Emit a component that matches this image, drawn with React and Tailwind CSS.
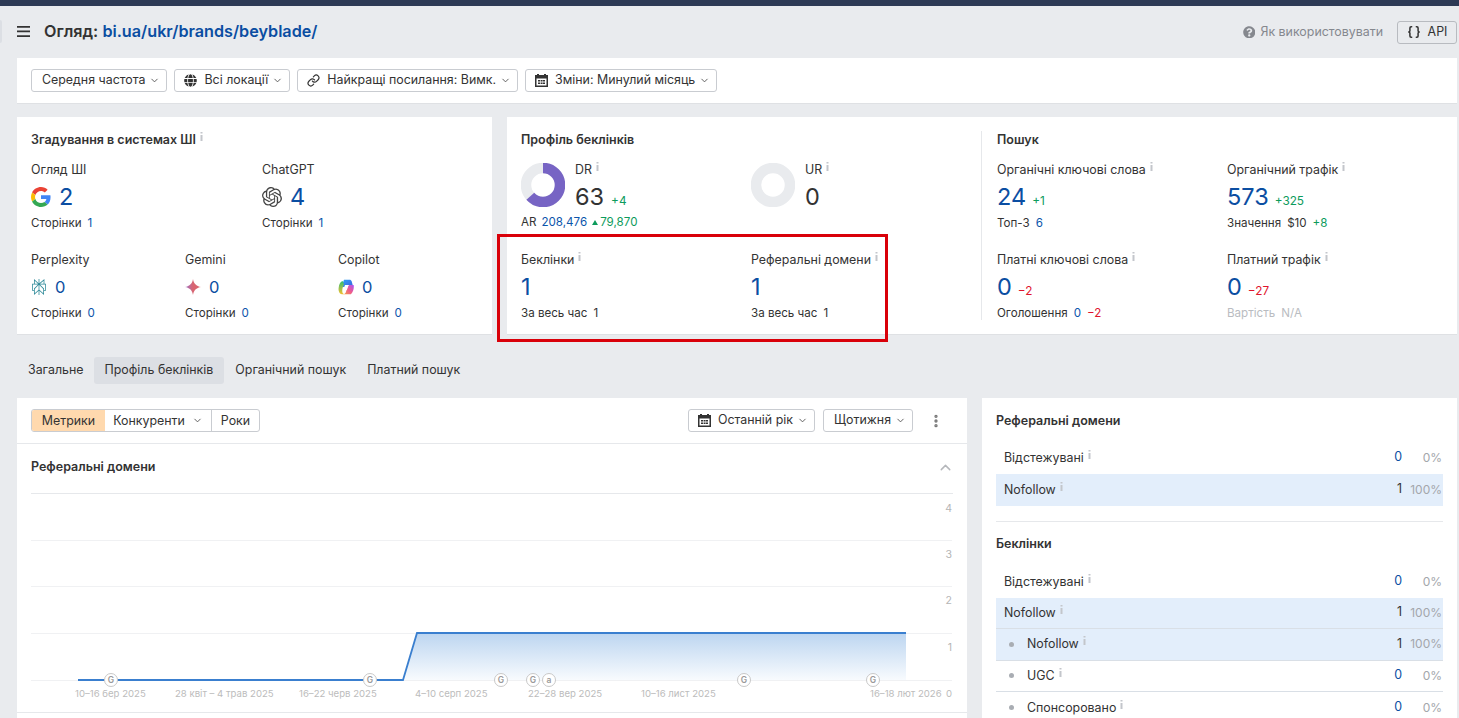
import { ChevronDown, ChevronUp, Link, Braces, EllipsisVertical } from "lucide-react"
import { FaGlobe, FaQuestionCircle } from "react-icons/fa"
import { SiOpenai, SiPerplexity } from "react-icons/si"

const Info = () => (
    <svg width="5" height="9" viewBox="0 0 5 9" className="ml-[3px] mt-[1px] shrink-0 text-[#c3c6cb]">
        <rect x="1.5" y="0" width="2" height="1.5" fill="currentColor" />
        <rect x="1.5" y="3" width="2" height="6" fill="currentColor" />
    </svg>
)

const Calendar = () => (
    <svg width="13" height="13" viewBox="0 0 13 13" className="shrink-0 text-[#333]">
        <path fill="currentColor" fillRule="evenodd" d="M2 0h2v1h5V0h2v1h2v12H0V1h2zM1.5 4.5v7h10v-7zM3 6h2v1.5H3zm2.6 0h2v1.5h-2zM8 6h2v1.5H8zM3 8.5h2V10H3zm2.6 0h2V10h-2zm2.4 0h2V10H8z" />
    </svg>
)

const Drop = ({ children, icon }) => (
    <button className={`h-[23px] ${icon ? "pl-[9px]" : "pl-[10px]"} pr-[6px] flex items-center gap-[7px] bg-white border border-[#c9ccd1] rounded-[3px] text-[12.4px] text-[#333]`}>
        {icon}
        <span>{children}</span>
        <ChevronDown size={11} strokeWidth={2} className="text-[#555] -ml-[3px]" />
    </button>
)

const Label = ({ children }) => (
    <div className="h-[18px] flex items-start text-[12.4px] leading-[18px] text-[#333]">
        <span>{children}</span>
        <Info />
    </div>
)

const Sub = ({ children }) => (
    <div className="h-[18px] flex items-center gap-[6px] text-[11.6px] text-[#333]">{children}</div>
)

const Blue = ({ children }) => <span className="text-[#0b55ab]">{children}</span>

const Value = ({ children, delta, neg }) => (
    <div className="h-[36px] flex items-center">
        <span className="text-[23.5px] text-[#0b4ea2]">{children}</span>
        {delta && <span className={`ml-[6px] mt-[9px] text-[11.8px] ${neg ? "text-[#e0142c]" : "text-[#0d9b5c]"}`}>{delta}</span>}
    </div>
)

const Metric = ({ label, value, delta, neg, sub }) => (
    <div>
        <Label>{label}</Label>
        <Value delta={delta} neg={neg}>{value}</Value>
        <Sub>{sub}</Sub>
    </div>
)

const GoogleIcon = () => (
    <svg width="20" height="20" viewBox="0 0 48 48" className="shrink-0">
        <path fill="#EA4335" d="M24 9.5c3.5 0 6.6 1.2 9.1 3.6l6.8-6.8C35.8 2.5 30.3 0 24 0 14.6 0 6.5 5.4 2.6 13.2l7.9 6.2C12.4 13.6 17.7 9.5 24 9.5z" />
        <path fill="#4285F4" d="M46.9 24.5c0-1.6-.1-3.1-.4-4.5H24v9h12.9c-.6 3-2.2 5.5-4.7 7.2l7.7 6c4.5-4.2 7-10.3 7-17.7z" />
        <path fill="#FBBC05" d="M10.5 28.6c-.5-1.4-.8-3-.8-4.6s.3-3.2.8-4.6l-7.9-6.2C.9 16.5 0 20.1 0 24s.9 7.5 2.6 10.8z" />
        <path fill="#34A853" d="M24 48c6.5 0 11.9-2.1 15.9-5.8l-7.7-6c-2.2 1.4-4.9 2.3-8.2 2.3-6.3 0-11.6-4.1-13.5-9.9l-7.9 6.2C6.5 42.6 14.6 48 24 48z" />
    </svg>
)

const GeminiIcon = () => (
    <svg width="16" height="16" viewBox="0 0 24 24" className="shrink-0">
        <defs>
            <linearGradient id="gem" x1="0" y1="0" x2="1" y2="0">
                <stop offset="0" stopColor="#9b72cb" />
                <stop offset="0.5" stopColor="#d96570" />
                <stop offset="1" stopColor="#d96570" />
            </linearGradient>
        </defs>
        <path fill="url(#gem)" d="M12 0c.8 6.5 5 11 12 12-7 1-11.2 5.5-12 12-.8-6.5-5-11-12-12 7-1 11.2-5.5 12-12z" />
    </svg>
)

const CopilotIcon = () => (
    <svg width="16" height="16" viewBox="0 0 24 24" className="shrink-0">
        <defs>
            <linearGradient id="cop1" x1="0" y1="0" x2="1" y2="1">
                <stop offset="0" stopColor="#2aa4f4" />
                <stop offset="1" stopColor="#3f5fe0" />
            </linearGradient>
            <linearGradient id="cop2" x1="0" y1="1" x2="1" y2="0">
                <stop offset="0" stopColor="#f5a03e" />
                <stop offset="0.5" stopColor="#ee5a8f" />
                <stop offset="1" stopColor="#a855f7" />
            </linearGradient>
            <linearGradient id="cop3" x1="0" y1="0" x2="0" y2="1">
                <stop offset="0" stopColor="#2fbf71" />
                <stop offset="1" stopColor="#f5c02e" />
            </linearGradient>
        </defs>
        <path fill="url(#cop1)" d="M9 1h8c2 0 3 1 3.5 2.5L22 9h-9l-2 3H5z" />
        <path fill="url(#cop3)" d="M7 3C3.5 4 1.500 8 1 13c-.6 4 .5 9 5 10h4c-2-.5-3-1.500-3.500-3.500C6 16 7 12 9 8z" />
        <path fill="url(#cop2)" d="M23.5 9c.8 4-.5 10-3.500 13-1 1-2 1-4 1H8c2-.5 3.500-2 4-4l2-6c.5-2 1.500-4 3-4z" />
        <path fill="#fff" d="M10.5 9H16l-2.800 7.500H7.800z" />
    </svg>
)

const AiCell = ({ label, icon, value, sub, big }) => (
    <div>
        <div className="h-[18px] text-[12.4px] leading-[18px] text-[#333]">{label}</div>
        <div className="h-[36px] flex items-center gap-[8px]">
            {icon}
            <span className={big ? "text-[23.5px] text-[#0b4ea2]" : "text-[16.5px] text-[#0b4ea2]"}>{value}</span>
        </div>
        <Sub>Сторінки <Blue>{sub}</Blue></Sub>
    </div>
)

const Donut = ({ percent }) => {
    const r = 17
    const c = 2 * Math.PI * r
    return (
        <svg width="44" height="44" viewBox="0 0 44 44" className="shrink-0 mr-[10px]">
            <circle cx="22" cy="22" r={r} fill="none" stroke="#e9ebee" strokeWidth="10.5" />
            {percent > 0 && (
                <circle cx="22" cy="22" r={r} fill="none" stroke="#7764c4" strokeWidth="10.5" strokeDasharray={`${c * percent / 100} ${c}`} transform="rotate(-90 22 22)" />
            )}
        </svg>
    )
}

const Rating = ({ label, value, delta, percent }) => (
    <div className="flex">
        <Donut percent={percent} />
        <div className="-mt-[2px]">
            <Label>{label}</Label>
            <div className="h-[36px] flex items-center">
                <span className="text-[23.5px] text-[#333]">{value}</span>
                {delta && <span className="ml-[7px] mt-[9px] text-[11.8px] text-[#0d9b5c]">{delta}</span>}
            </div>
        </div>
    </div>
)

const Row = ({ label, value, pct, active, nested, border, tall, first }) => (
    <div className={`${tall ? "h-[33px]" : first ? "h-[32px]" : "h-[31.5px]"} flex items-center pr-[1px] text-[12.4px] ${active ? "bg-[#e3eefb]" : ""} ${border ? "border-b border-[#d9dfe6]" : ""}`}>
        {nested && <span className="ml-[13px] w-[5px] h-[5px] rounded-full bg-[#a9adb3]" />}
        <div className={`${nested ? "ml-[13px]" : "ml-[8px]"} flex items-start leading-[18px] text-[#333]`}>
            <span>{label}</span>
            <Info />
        </div>
        <span className={`ml-auto ${value === "1" ? "text-[#333]" : "text-[#0b4ea2]"}`}>{value}</span>
        <span className="w-[40px] text-right text-[12px] text-[#a3a6ab]">{pct}</span>
    </div>
)

const Marker = ({ x, t = "G" }) => (
    <g>
        <circle cx={x} cy="680" r="6.5" fill="#fff" stroke="#c8c8c8" />
        <text x={x} y="683" textAnchor="middle" fontSize="8.5" fontWeight="600" fill="#9a9a9a">{t}</text>
    </g>
)

const ticks = [
    [75, "10–16 бер 2025"],
    [175, "28 квіт – 4 трав 2025"],
    [299, "16–22 черв 2025"],
    [415, "4–10 серп 2025"],
    [528, "22–28 вер 2025"],
    [641, "10–16 лист 2025"],
    [870, "16–18 лют 2026"],
]

const Chart = () => (
    <svg viewBox="31 494 922 218" className="block w-[922px] h-[218px]">
        <defs>
            <linearGradient id="area" x1="0" y1="0" x2="0" y2="1">
                <stop offset="0" stopColor="#bcd5f0" />
                <stop offset="1" stopColor="#f8fbfe" />
            </linearGradient>
        </defs>
        {[540, 586, 633, 680].map(y => (
            <line key={y} x1="31" x2="952" y1={y + 0.5} y2={y + 0.5} stroke="#f0f1f3" />
        ))}
        {[[508, "4"], [554, "3"], [600, "2"], [647, "1"]].map(([y, t]) => (
            <text key={t} x="952" y={y + 4} textAnchor="end" fontSize="10.5" fill="#b5b5b5">{t}</text>
        ))}
        <path d="M403 680 L417 633 H906 V680 Z" fill="url(#area)" />
        <path d="M78 680 H403 L417 633 H906" fill="none" stroke="#3a7fcf" strokeWidth="1.8" />
        {ticks.map(([x, t]) => (
            <text key={t} x={x} y="697" fontSize="9.6" fill="#bcbcbc">{t}</text>
        ))}
        <text x="952" y="697" textAnchor="end" fontSize="9.6" fill="#bcbcbc">0</text>
        <Marker x={111} />
        <Marker x={370} />
        <Marker x={501} />
        <Marker x={533} />
        <Marker x={549} t="a" />
        <Marker x={744} />
        <Marker x={873} />
    </svg>
)

export default function App() {
    return (
        <div className="relative h-[718px] overflow-hidden bg-[#e9ebee] font-['Inter',sans-serif] text-[#333]">
            <div className="h-[6px] bg-[#2d3a55]" />

            {/* header */}
            <div className="h-[52px] flex items-center pl-[17px] pr-[2px]">
                <svg width="13" height="11" viewBox="0 0 13 11" className="-mt-[2px] text-[#333]">
                    <path fill="currentColor" d="M0 0h13v1.7H0zM0 4.6h13v1.7H0zM0 9.2h13v1.7H0z" />
                </svg>
                <div className="ml-[14px] -mt-[2px] text-[16.2px] font-semibold leading-none">
                    Огляд: <span className="text-[#0b4ea2]">bi.ua/ukr/brands/beyblade/</span>
                </div>
                <div className="ml-auto flex items-center gap-[5px] text-[12.4px] text-[#85888e]">
                    <FaQuestionCircle size={12.5} />
                    <span>Як використовувати</span>
                </div>
                <button className="ml-[14px] h-[23px] w-[60px] flex items-center justify-center gap-[7px] border border-[#b8bbc0] rounded-[3px] text-[12.4px] text-[#333]">
                    <Braces size={14} strokeWidth={2.6} />
                    API
                </button>
            </div>

            {/* filters */}
            <div className="ml-[17px] mr-[2px] h-[46px] bg-white border-b border-[#dfe1e4] flex items-center gap-[7px] pl-[14px]">
                <Drop>Середня частота</Drop>
                <Drop icon={<FaGlobe size={13} className="text-[#333]" />}>Всі локації</Drop>
                <Drop icon={<Link size={13} strokeWidth={2.2} />}>Найкращі посилання: Вимк.</Drop>
                <Drop icon={<Calendar />}>Зміни: Минулий місяць</Drop>
            </div>

            {/* stats */}
            <div className="ml-[17px] mr-[2px] mt-[13px] h-[218px] flex gap-[15px]">
                <div className="w-[475px] bg-white border-b border-[#dfe1e4] px-[14px] pt-[14px]">
                    <div className="h-[18px] flex items-start text-[12.5px] leading-[18px] font-semibold">
                        <span>Згадування в системах ШІ</span>
                        <Info />
                    </div>
                    <div className="mt-[12px] grid grid-cols-[231px_1fr]">
                        <AiCell big label="Огляд ШІ" icon={<GoogleIcon />} value="2" sub="1" />
                        <AiCell big label="ChatGPT" icon={<SiOpenai size={20} className="text-[#444]" />} value="4" sub="1" />
                    </div>
                    <div className="mt-[18px] grid grid-cols-[154px_153px_1fr]">
                        <AiCell label="Perplexity" icon={<SiPerplexity size={16} className="text-[#2f8a99]" />} value="0" sub="0" />
                        <AiCell label="Gemini" icon={<GeminiIcon />} value="0" sub="0" />
                        <AiCell label="Copilot" icon={<CopilotIcon />} value="0" sub="0" />
                    </div>
                </div>

                <div className="flex-1 bg-white border-b border-[#dfe1e4] flex pt-[14px] pl-[14px]">
                    <div className="w-[445px]">
                        <div className="h-[18px] text-[12.5px] leading-[18px] font-semibold">Профіль беклінків</div>
                        <div className="mt-[14px] grid grid-cols-[230px_1fr] h-[48px]">
                            <Rating label="DR" value="63" delta="+4" percent={63} />
                            <Rating label="UR" value="0" percent={0} />
                        </div>
                        <div className="h-[18px] mt-[3px] flex items-center gap-[5px] text-[11.6px]">
                            AR <Blue>208,476</Blue>
                            <span className="flex items-center gap-[2px] text-[#0d9b5c]">
                                <span className="w-0 h-0 border-x-[3.5px] border-x-transparent border-b-[5px] border-b-[#0d9b5c]" />
                                79,870
                            </span>
                        </div>
                        <div className="mt-[19px] grid grid-cols-[230px_1fr]">
                            <Metric label="Беклінки" value="1" sub={<>За весь час <span>1</span></>} />
                            <Metric label="Реферальні домени" value="1" sub={<>За весь час <span>1</span></>} />
                        </div>
                    </div>
                    <div className="flex-1 ml-[15px] mr-[14px] h-[189px] border-l border-[#e6e8eb] pl-[15px]">
                        <div className="h-[18px] text-[12.5px] leading-[18px] font-semibold">Пошук</div>
                        <div className="mt-[12px] grid grid-cols-[230px_1fr] gap-y-[18px]">
                            <Metric label="Органічні ключові слова" value="24" delta="+1" sub={<>Топ-3 <Blue>6</Blue></>} />
                            <Metric label="Органічний трафік" value="573" delta="+325" sub={<>Значення <span>$10</span> <span className="text-[#0d9b5c]">+8</span></>} />
                            <Metric label="Платні ключові слова" value="0" delta="−2" neg sub={<>Оголошення <Blue>0</Blue> <span className="text-[#e0142c]">−2</span></>} />
                            <Metric label="Платний трафік" value="0" delta="−27" neg sub={<span className="flex gap-[6px] text-[#b9bcc1]">Вартість <span>N/A</span></span>} />
                        </div>
                    </div>
                </div>
            </div>

            {/* tabs */}
            <div className="ml-[17px] mt-[22px] flex text-[12.4px] text-[#333]">
                <div className="h-[27px] pl-[11px] pr-[10px] flex items-center">Загальне</div>
                <div className="h-[27px] px-[11px] flex items-center bg-[#dcdfe4] rounded-[3px]">Профіль беклінків</div>
                <div className="h-[27px] pl-[11px] pr-[10px] flex items-center">Органічний пошук</div>
                <div className="h-[27px] px-[11px] flex items-center">Платний пошук</div>
            </div>

            <div className="ml-[17px] mr-[2px] mt-[14px] flex gap-[15px]">
                {/* chart card */}
                <div className="w-[950px] bg-white">
                    <div className="h-[46px] border-b border-[#e6e8eb] flex items-center px-[14px]">
                        <div className="flex h-[23px] border border-[#c9ccd1] rounded-[3px] text-[12.4px] leading-[21px]">
                            <div className="w-[73px] text-center bg-[#ffd9ae] rounded-l-[2px]">Метрики</div>
                            <div className="w-[107px] flex items-center justify-center gap-[7px] border-r border-[#c9ccd1]">
                                Конкуренти <ChevronDown size={11} className="text-[#555]" />
                            </div>
                            <div className="w-[47px] text-center">Роки</div>
                        </div>
                        <div className="ml-auto flex items-center gap-[8px]">
                            <Drop icon={<Calendar />}>Останній рік</Drop>
                            <Drop>Щотижня</Drop>
                            <EllipsisVertical size={16} strokeWidth={3} className="ml-[7px] mr-[9px] text-[#777]" />
                        </div>
                    </div>
                    <div className="mx-[14px]">
                        <div className="h-[50px] pb-[3px] border-b border-[#e6e8eb] flex items-center justify-between">
                            <span className="text-[12.5px] font-semibold">Реферальні домени</span>
                            <ChevronUp size={17} className="text-[#b5b7bb] -mr-[1px]" />
                        </div>
                        <Chart />
                    </div>
                    <div className="border-t border-[#e6e8eb] h-[10px]" />
                </div>

                {/* side card */}
                <div className="flex-1 bg-white px-[14px] pt-[14px] h-[330px]">
                    <div className="h-[18px] text-[12.5px] leading-[18px] font-semibold">Реферальні домени</div>
                    <div className="mt-[11px]">
                        <Row tall label="Відстежувані" value="0" pct="0%" />
                        <Row label="Nofollow" value="1" pct="100%" active />
                    </div>
                    <div className="mt-[15px] border-t border-[#e6e8eb]" />
                    <div className="mt-[13px] h-[18px] text-[12.5px] leading-[18px] font-semibold">Беклінки</div>
                    <div className="mt-[13px]">
                        <Row first label="Відстежувані" value="0" pct="0%" />
                        <Row label="Nofollow" value="1" pct="100%" active border />
                        <Row label="Nofollow" value="1" pct="100%" active nested border />
                        <Row label="UGC" value="0" pct="0%" nested border />
                        <Row label="Спонсоровано" value="0" pct="0%" nested />
                    </div>
                </div>
            </div>

            {/* red highlight drawn over the screenshot */}
            <div className="absolute left-[497px] top-[234px] w-[391px] h-[108px] border-[3px] border-[#d90009] pointer-events-none" />
            <div className="absolute left-0 top-[20px] w-[2px] h-[23px] bg-[#dcdfe4] rounded-r-[2px]" />
        </div>
    )
}
